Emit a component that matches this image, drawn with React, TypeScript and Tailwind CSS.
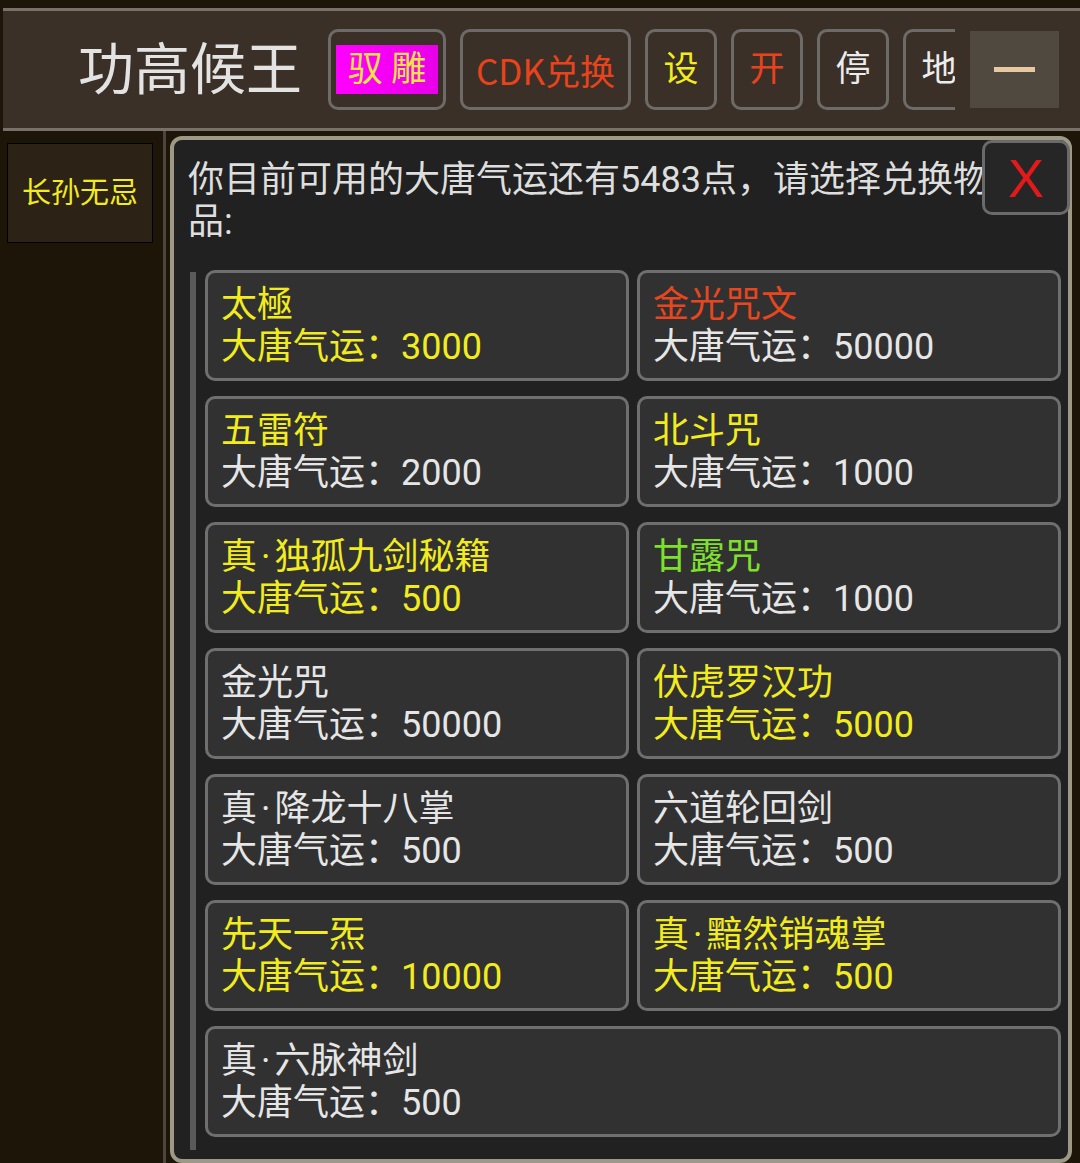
import React from "react";

type Item = { name: string; price: string; nc: string; pc: string; wide?: boolean };

const Y = "text-[#f2ec1e]";
const W = "text-[#e6e6e6]";
const R = "text-[#e8461f]";
const G = "text-[#7ee02c]";

const items: Item[] = [
  { name: "太極", price: "3000", nc: Y, pc: Y },
  { name: "金光咒文", price: "50000", nc: R, pc: W },
  { name: "五雷符", price: "2000", nc: Y, pc: W },
  { name: "北斗咒", price: "1000", nc: Y, pc: W },
  { name: "真·独孤九剑秘籍", price: "500", nc: Y, pc: Y },
  { name: "甘露咒", price: "1000", nc: G, pc: W },
  { name: "金光咒", price: "50000", nc: W, pc: W },
  { name: "伏虎罗汉功", price: "5000", nc: Y, pc: Y },
  { name: "真·降龙十八掌", price: "500", nc: W, pc: W },
  { name: "六道轮回剑", price: "500", nc: W, pc: W },
  { name: "先天一炁", price: "10000", nc: Y, pc: Y },
  { name: "真·黯然销魂掌", price: "500", nc: Y, pc: Y },
  { name: "真·六脉神剑", price: "500", nc: W, pc: W, wide: true },
];

function HBtn({ w, children }: { w: string; children: React.ReactNode }) {
  return (
    <div className={`${w} h-[81px] shrink-0 rounded-[10px] border-[3px] border-[#6d6b67] flex items-center justify-center`}>
      {children}
    </div>
  );
}

function Name({ text }: { text: string }) {
  const parts = text.split("·");
  if (parts.length === 1) return <>{text}</>;
  return (
    <>
      {parts[0]}
      <span className="px-[4px]">·</span>
      {parts[1]}
    </>
  );
}

export default function App() {
  return (
    <div className="w-[1080px] h-[1163px] bg-[#1e1509] overflow-hidden flex flex-col font-['Roboto','Noto_Sans_CJK_SC',sans-serif]">
      <div className="h-2 shrink-0" />
      <header className="ml-[3px] h-[123px] shrink-0 border-y-[3px] border-[#77716a] bg-[#3a3027] flex items-center">
        <div className="pl-[75px] w-[325px] shrink-0 text-[56px] leading-none text-[#e3e3e3]">功高候王</div>
        <div className="w-[627px] shrink-0 overflow-hidden flex items-center gap-[14px]">
          <HBtn w="w-[118px]">
            <div className="w-[102px] h-[49px] bg-gradient-to-r from-[#ff00ff] to-[#e800e8] flex items-center justify-center text-[35px] leading-none text-[#f3e640]">
              驭 雕
            </div>
          </HBtn>
          <HBtn w="w-[171px]">
            <span className="font-['Noto_Sans_CJK_SC',sans-serif] text-[35px] leading-none text-[#e8431c]">CDK兑换</span>
          </HBtn>
          <HBtn w="w-[72px]">
            <span className="text-[35px] leading-none text-[#f2ec1e]">设</span>
          </HBtn>
          <HBtn w="w-[72px]">
            <span className="text-[35px] leading-none text-[#e8431c]">开</span>
          </HBtn>
          <HBtn w="w-[72px]">
            <span className="text-[35px] leading-none text-[#ececec]">停</span>
          </HBtn>
          <HBtn w="w-[72px]">
            <span className="text-[35px] leading-none text-[#ececec]">地</span>
          </HBtn>
        </div>
        <div className="ml-[15px] w-[89px] h-[77px] shrink-0 bg-[#50493f] flex items-center justify-center">
          <div className="w-[41px] h-[5px] bg-[#e8c8a2]" />
        </div>
      </header>
      <div className="flex flex-1 min-h-0">
        <aside className="w-[166px] shrink-0 border-r-[3px] border-[#4e463c] pt-[12px] pl-[7px]">
          <div className="w-[146px] h-[100px] bg-[#2c2216] border border-black flex items-center justify-center text-[29px] leading-none text-[#f2ec1e]">
            长孙无忌
          </div>
        </aside>
        <main className="flex-1 min-w-0 pt-[5px] pl-[4px] pr-[8px]">
          <div className="relative h-full rounded-[12px] border-[4px] border-[#9d9986] bg-[#212121]">
            <div className="pt-[19px] pl-[14px] w-[835px] text-[36px] leading-[42px] text-[#dedede]">
              你目前可用的大唐气运还有5483点，请选择兑换物品:
            </div>
            <button className="absolute top-0 left-[808px] w-[88px] h-[75px] rounded-[10px] border-[3px] border-[#6a6a6a] bg-[#262626] flex items-center justify-center">
              <span className="font-['Liberation_Sans',sans-serif] text-[54px] leading-none text-[#e41a1a]">X</span>
            </button>
            <div className="mt-[27px] pl-[16px] pr-[7px] flex">
              <div className="w-[6px] mt-[2px] bg-[#5a5a5a] shrink-0 self-stretch -mb-[13px]" />
              <div className="ml-[9px] flex-1 grid grid-cols-2 gap-x-[8px] gap-y-[15px]">
                {items.map((it) => (
                  <div
                    key={it.name}
                    className={`${it.wide ? "col-span-2" : ""} h-[111px] rounded-[10px] border-[3px] border-[#6f6f6f] bg-[#313131] px-[13px] flex flex-col justify-center text-[36px] leading-[42px]`}
                  >
                    <div className={it.nc}>
                      <Name text={it.name} />
                    </div>
                    <div className={it.pc}>大唐气运：{it.price}</div>
                  </div>
                ))}
              </div>
            </div>
          </div>
        </main>
      </div>
    </div>
  );
}
